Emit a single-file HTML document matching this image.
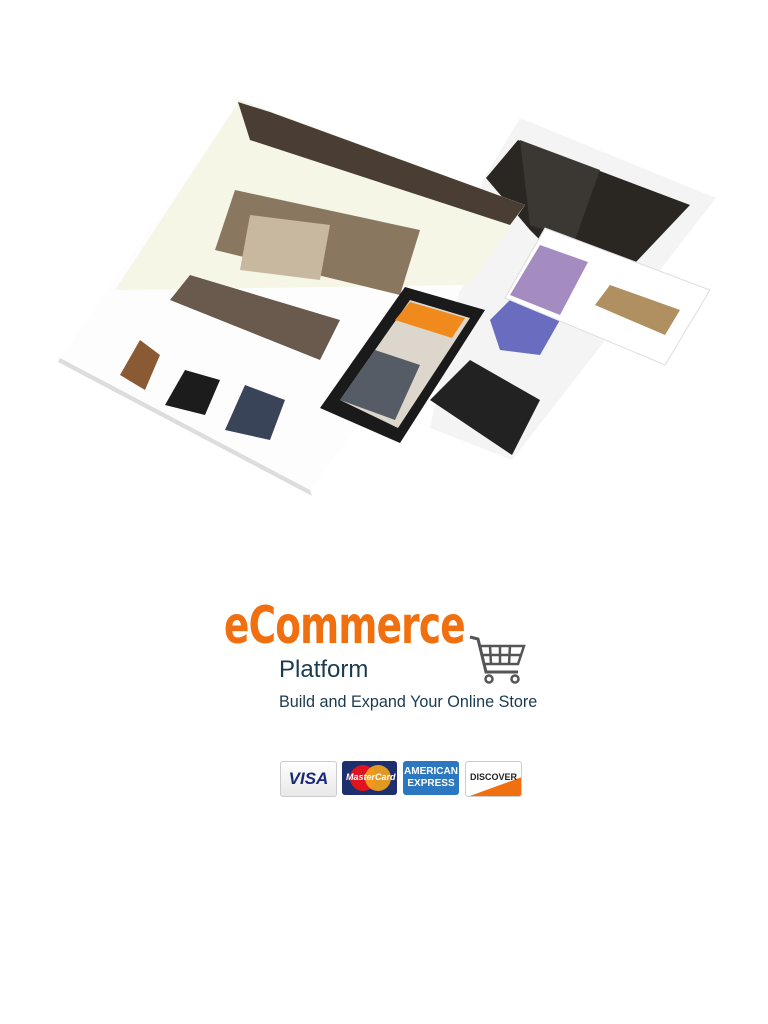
<!DOCTYPE html>
<html><head><meta charset="utf-8"><style>
html,body{margin:0;padding:0;background:#fff;width:768px;height:1024px;overflow:hidden;font-family:"Liberation Sans",sans-serif}
.t{position:absolute;white-space:nowrap}
</style></head><body>
<svg width="768" height="520" style="position:absolute;left:0;top:0">
<polygon points="483,180 520,118 716,198 512,460 430,428" fill="#f4f4f4"/>
<polygon points="486,178 518,140 690,205 600,300 530,230" fill="#2a2622"/>
<polygon points="520,140 600,170 575,240 530,225" fill="#3b3834"/>
<polygon points="430,400 470,360 540,400 512,455" fill="#222"/>
<polygon points="490,320 520,290 560,320 540,355 500,350" fill="#6a6cc0"/>
<polygon points="505,298 545,228 710,290 665,365" fill="#fff" stroke="#ddd"/>
<polygon points="510,295 540,245 588,262 560,315" fill="#a58cc0"/>
<polygon points="595,305 610,285 680,310 665,335" fill="#b09060"/>
<polygon points="60,358 240,100 525,205 310,490" fill="#fdfdfd"/>
<polygon points="115,290 240,100 525,205 470,285" fill="#f5f6e6"/>
<polygon points="238,102 270,112 525,205 510,225 250,140" fill="#4a3e34"/>
<polygon points="215,250 235,190 420,230 400,295" fill="#8a7760"/>
<polygon points="250,215 330,225 320,280 240,270" fill="#c8b8a0"/>
<polygon points="170,300 190,275 340,320 320,360" fill="#6a5a4e"/>
<polygon points="120,375 140,340 160,355 145,390" fill="#8a5a35"/>
<polygon points="165,405 185,370 220,380 205,415" fill="#1c1c1c"/>
<polygon points="225,430 245,385 285,400 270,440" fill="#3a4458"/>
<polygon points="60,358 310,490 312,496 58,362" fill="#ddd"/>
<polygon points="320,408 405,287 485,310 400,443" fill="#1a1a1a"/>
<polygon points="340,400 410,300 470,318 398,428" fill="#dcd6cc"/>
<polygon points="395,320 410,302 465,318 452,338" fill="#f08a1c"/>
<polygon points="340,400 375,350 420,365 395,420" fill="#555c66"/>
</svg>
<div class="t" style="left:224px;top:596px;font-size:52px;font-weight:bold;color:#f07010;font-family:'DejaVu Sans Condensed','Liberation Sans Narrow',sans-serif;transform:scaleX(0.8);transform-origin:left top;letter-spacing:-1px">eCommerce</div>
<svg style="position:absolute;left:468px;top:634px" width="60" height="52" viewBox="0 0 60 52">
<path d="M2 3 L10 5 L18 38 L50 38" fill="none" stroke="#555" stroke-width="3"/>
<path d="M12 12 L56 12 L50 30 L16 30 Z M22 12 L23 30 M32 12 L32 30 M42 12 L41 30 M14 21 L53 21" fill="none" stroke="#555" stroke-width="2.5"/>
<circle cx="21" cy="45" r="3.5" fill="none" stroke="#555" stroke-width="2.5"/><circle cx="47" cy="45" r="3.5" fill="none" stroke="#555" stroke-width="2.5"/>
</svg>
<div class="t" style="left:279px;top:656px;font-size:24px;color:#1a3a50">Platform</div>
<div class="t" style="left:279px;top:693px;font-size:16.2px;color:#1a3a50">Build and Expand Your Online Store</div>
<div class="t" style="left:280px;top:761px;width:55px;height:34px;border:1px solid #ccc;border-radius:3px;background:linear-gradient(#fff,#e8e8e8);color:#1a2a78;font:italic bold 17px 'Liberation Sans';text-align:center;line-height:34px">VISA</div>
<div class="t" style="left:342px;top:761px;width:55px;height:34px;border-radius:3px;background:#1e2f6e;overflow:hidden"><div style="position:absolute;left:8px;top:4px;width:26px;height:26px;border-radius:50%;background:#e0141e"></div><div style="position:absolute;left:23px;top:4px;width:26px;height:26px;border-radius:50%;background:#f7a51b;opacity:.9"></div><div style="position:absolute;left:4px;top:11px;color:#fff;font:italic bold 9px 'Liberation Sans'">MasterCard</div></div>
<div class="t" style="left:403px;top:761px;width:56px;height:34px;border-radius:3px;background:#2b77c0;color:#fff;font:bold 10px 'Liberation Sans';text-align:center;line-height:12px;padding-top:5px;box-sizing:border-box">AMERICAN<br>EXPRESS</div>
<div class="t" style="left:465px;top:761px;width:55px;height:34px;border:1px solid #ccc;border-radius:3px;background:linear-gradient(160deg,#fff 65%,#f07010 66%);color:#222;font:bold 9px 'Liberation Sans';text-align:center;line-height:30px">DISCOVER</div>
</body></html>
